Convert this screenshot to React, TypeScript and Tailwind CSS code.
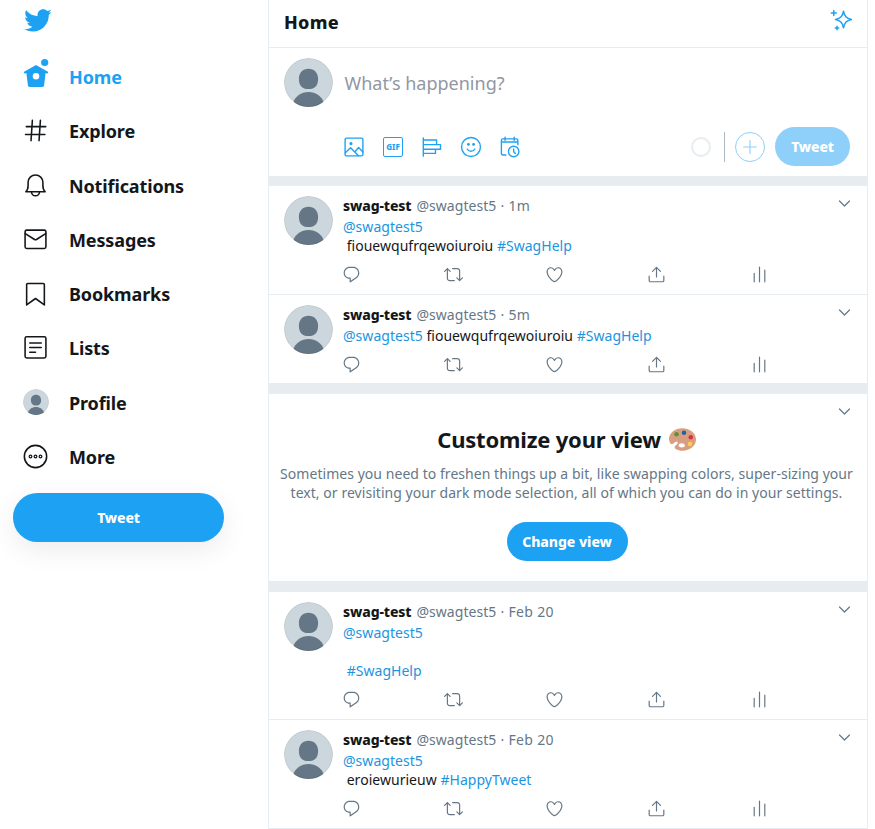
import React from "react";

type IconProps = { className?: string };

const Stroke = ({ className = "", w = 1.5, children }: { className?: string; w?: number; children: React.ReactNode }) => (
  <svg viewBox="0 0 24 24" className={className} fill="none" stroke="currentColor" strokeWidth={w} strokeLinecap="round" strokeLinejoin="round">
    {children}
  </svg>
);

const Solid = ({ className = "", d }: { className?: string; d: string }) => (
  <svg viewBox="0 0 24 24" className={className} fill="currentColor">
    <path d={d} />
  </svg>
);

const BIRD =
  "M23.643 4.937c-.835.37-1.732.62-2.675.733.962-.576 1.7-1.49 2.048-2.578-.9.534-1.897.922-2.958 1.13-.85-.904-2.06-1.47-3.4-1.47-2.572 0-4.658 2.086-4.658 4.66 0 .364.042.718.12 1.06-3.873-.195-7.304-2.05-9.602-4.868-.4.69-.63 1.49-.63 2.342 0 1.616.823 3.043 2.072 3.878-.764-.025-1.482-.234-2.11-.583v.06c0 2.257 1.605 4.14 3.737 4.568-.392.106-.803.162-1.227.162-.3 0-.593-.028-.877-.082.593 1.85 2.313 3.198 4.352 3.234-1.595 1.25-3.604 1.995-5.786 1.995-.376 0-.747-.022-1.112-.065 2.062 1.323 4.51 2.093 7.14 2.093 8.57 0 13.255-7.098 13.255-13.254 0-.2-.005-.402-.014-.602.91-.658 1.7-1.477 2.323-2.41z";
const REPLY =
  "M14.046 2.242l-4.148-.01h-.002c-4.374 0-7.8 3.427-7.8 7.802 0 4.098 3.186 7.206 7.465 7.37v3.828c0 .108.044.286.12.403.142.225.384.347.632.347.138 0 .277-.038.402-.118.264-.168 6.473-4.14 8.088-5.506 1.902-1.61 3.04-3.97 3.043-6.312v-.017c-.006-4.367-3.43-7.787-7.8-7.788zm3.787 12.972c-1.134.96-4.862 3.405-6.772 4.643V16.67c0-.414-.335-.75-.75-.75h-.396c-3.66 0-6.318-2.476-6.318-5.886 0-3.534 2.768-6.302 6.3-6.302l4.147.01h.002c3.532 0 6.3 2.766 6.302 6.296-.003 1.91-.942 3.844-2.514 5.176z";
const RETWEET =
  "M23.77 15.67c-.292-.293-.767-.293-1.06 0l-2.22 2.22V7.65c0-2.068-1.683-3.75-3.75-3.75h-5.85c-.414 0-.75.336-.75.75s.336.75.75.75h5.85c1.24 0 2.25 1.01 2.25 2.25v10.24l-2.22-2.22c-.293-.293-.768-.293-1.06 0s-.294.768 0 1.06l3.5 3.5c.145.147.337.22.53.22s.383-.072.53-.22l3.5-3.5c.294-.292.294-.767 0-1.06zm-10.66 3.28H7.26c-1.24 0-2.25-1.01-2.25-2.25V6.46l2.22 2.22c.148.147.34.22.532.22s.384-.073.53-.22c.293-.293.293-.768 0-1.06l-3.5-3.5c-.293-.294-.768-.294-1.06 0l-3.5 3.5c-.294.292-.294.767 0 1.06s.767.293 1.06 0l2.22-2.22V16.7c0 2.068 1.683 3.75 3.75 3.75h5.85c.414 0 .75-.336.75-.75s-.337-.75-.75-.75z";
const HEART =
  "M12 21.638h-.014C9.403 21.59 1.95 14.856 1.95 8.478c0-3.064 2.525-5.754 5.403-5.754 2.29 0 3.83 1.58 4.646 2.73.814-1.148 2.354-2.73 4.645-2.73 2.88 0 5.404 2.69 5.404 5.755 0 6.376-7.454 13.11-10.037 13.157H12zM7.354 4.225c-2.08 0-3.903 1.988-3.903 4.255 0 5.74 7.034 11.596 8.55 11.658 1.518-.062 8.55-5.917 8.55-11.658 0-2.267-1.823-4.255-3.903-4.255-2.528 0-3.94 2.936-3.952 2.965-.23.562-1.156.562-1.387 0-.014-.03-1.425-2.965-3.954-2.965z";
const SHARE =
  "M17.53 7.47l-5-5c-.293-.293-.768-.293-1.06 0l-5 5c-.294.293-.294.768 0 1.06s.767.294 1.06 0l3.72-3.72V15c0 .414.336.75.75.75s.75-.336.75-.75V4.81l3.72 3.72c.146.147.338.22.53.22s.384-.072.53-.22c.293-.293.293-.767 0-1.06zM19.708 21.944H4.292C3.028 21.944 2 20.916 2 19.652V14c0-.414.336-.75.75-.75s.75.336.75.75v5.652c0 .437.355.792.792.792h15.416c.437 0 .792-.355.792-.792V14c0-.414.336-.75.75-.75s.75.336.75.75v5.652c0 1.264-1.028 2.292-2.292 2.292z";

const Avatar = ({ className = "" }: IconProps) => (
  <svg viewBox="0 0 49 49" className={`shrink-0 rounded-full ${className}`}>
    <circle cx="24.5" cy="24.5" r="24.5" fill="#ccd6dd" />
    <path d="M24.5 10.800c5.700 0 9.600 4.100 9.600 9.900 0 6.900-3 10.300-9.600 10.300s-9.600-3.400-9.600-10.300c0-5.800 3.900-9.900 9.600-9.900z" fill="#657786" />
    <path d="M8.700 45.500C11.200 38.200 17 34 24.500 34s13.300 4.200 15.800 11.500C36 48 30.300 49 24.500 49s-11.500-1-15.800-3.500z" fill="#657786" />
    <circle cx="24.5" cy="24.5" r="24" fill="none" stroke="#000" strokeOpacity="0.06" />
  </svg>
);

const NAV_ICON = "h-[25px] w-[25px]";

const HomeIcon = () => (
  <svg viewBox="0 0 26 32" className="h-[32px] w-[26px]" fill="currentColor">
    <circle cx="21.700" cy="5.500" r="3.600" />
    <path
      fillRule="evenodd"
      d="M13 8l11.500 6.400c.7.400.9 1.100.4 1.700-.3.400-.8.500-1.300.3l-1-.5-1.500 12.400c-.1 1-.9 1.700-1.900 1.700H6.800c-1 0-1.800-.7-1.900-1.700L3.400 15.900l-1 .5c-.5.200-1 .1-1.300-.3-.5-.6-.3-1.300.4-1.700zM13 15.900a3.300 3.300 0 100 6.600 3.300 3.300 0 000-6.600z"
    />
  </svg>
);

const nav: { label: string; icon: React.ReactNode }[] = [
  { label: "Home", icon: <HomeIcon /> },
  {
    label: "Explore",
    icon: (
      <Stroke className={NAV_ICON}>
        <path d="M9 2.300L7.700 21.700M16.700 2.300L15.400 21.700M3.200 8.300h18.600M2.400 15.800h18.600" />
      </Stroke>
    ),
  },
  {
    label: "Notifications",
    icon: (
      <Stroke className={NAV_ICON}>
        <path d="M2.700 18c1.500-1.300 2.200-3.200 2.200-6V8.900C4.900 5 8.100 2 12 2S19.100 5 19.100 8.900V12c0 2.800.7 4.700 2.200 6z" />
        <path d="M8.200 18.200c0 2.100 1.700 3.700 3.800 3.700s3.800-1.600 3.800-3.700" />
      </Stroke>
    ),
  },
  {
    label: "Messages",
    icon: (
      <Stroke className={NAV_ICON}>
        <rect x="2" y="3" width="20" height="17.600" rx="1.600" />
        <path d="M2.200 6.400l8.900 5.600c.6.400 1.200.4 1.800 0l8.900-5.600" />
      </Stroke>
    ),
  },
  {
    label: "Bookmarks",
    icon: (
      <Stroke className={NAV_ICON}>
        <path d="M3.500 23V3.400c0-.6.400-1 1-1h15c.6 0 1 .4 1 1V23L12 16.800z" />
      </Stroke>
    ),
  },
  {
    label: "Lists",
    icon: (
      <Stroke className={NAV_ICON}>
        <rect x="2" y="1.700" width="20" height="20.400" rx="1.600" />
        <path d="M6.500 7.600h11M6.500 12h11M6.500 16.500h5.500" />
      </Stroke>
    ),
  },
  { label: "Profile", icon: <Avatar className="h-[26px] w-[26px]" /> },
  {
    label: "More",
    icon: (
      <Stroke className={NAV_ICON}>
        <circle cx="12" cy="12" r="10.700" />
        <g strokeWidth="1.200">
          <circle cx="7.200" cy="12" r="1.300" />
          <circle cx="12" cy="12" r="1.300" />
          <circle cx="16.800" cy="12" r="1.300" />
        </g>
      </Stroke>
    ),
  },
];

const Chevron = () => (
  <svg viewBox="0 0 12 7" className="h-[7px] w-[12px] text-[#657786]" fill="none" stroke="currentColor" strokeWidth="1.200" strokeLinecap="round" strokeLinejoin="round">
    <path d="M1.500 1l5 5 5-5" />
  </svg>
);

const Actions = () => (
  <div className="-ml-px mt-[10px] flex h-[19px] text-[#657786]">
    {[REPLY, RETWEET, HEART, SHARE].map((d, i) => (
      <div key={i} className="w-[101.700px]">
        <Solid d={d} className="h-[19px] w-[19px]" />
      </div>
    ))}
    <Stroke className="ml-px h-[19px] w-[19px]">
      <path d="M12 2.800v18.400M5.300 10.500v10.700M18.700 6.500v14.700" />
    </Stroke>
  </div>
);

const Link = ({ children }: { children: React.ReactNode }) => <span className="text-[#1b95e0]">{children}</span>;

function Tweet({ time, frame, children }: { time: string; frame: string; children: React.ReactNode }) {
  return (
    <article className={`flex pl-[15px] pr-[17px] pt-[10px] ${frame}`}>
      <Avatar className="h-[49px] w-[49px]" />
      <div className="ml-[10px] min-w-0 flex-1">
        <div className="flex h-[21px] justify-between">
          <div className="text-[14px] leading-[19px] whitespace-pre text-[#657786]">
            <span className="font-extrabold tracking-[-0.120px] text-[#14171a]">swag-test</span>
            <span className="ml-[5px] tracking-[0.050px]">@swagtest5</span>
            <span className="tracking-[0.330px]"> · {time}</span>
          </div>
          <div className="pt-[4px]">
            <Chevron />
          </div>
        </div>
        <div className="text-[14px] leading-[19px] whitespace-pre tracking-[0.030px] text-[#14171a]">{children}</div>
        <Actions />
      </div>
    </article>
  );
}

const Gap = ({ className = "" }: IconProps) => <div className={`-mx-px bg-[#e6ecf0] ${className}`} />;

const composer = [
  <>
    <rect x="2.300" y="2.300" width="19.400" height="19.400" rx="1.500" />
    <circle cx="8.700" cy="8.300" r="1" fill="currentColor" />
    <path d="M2.500 18.300l5.800-5.500 8.500 8.800M12.800 17.500l4.200-5 4.700 5" />
  </>,
  null,
  <>
    <path d="M2.500 2v20M2.500 4.400h14.500v5H2.500M2.500 9.400h18.800v5.100H2.500M2.500 14.500h13.300V19H2.500" />
  </>,
  <>
    <circle cx="12" cy="12" r="10.300" />
    <path d="M7.800 14.200c.8 1.600 2.300 2.500 4.200 2.500s3.400-.9 4.200-2.500" />
    <circle cx="9.200" cy="9.200" r=".8" fill="currentColor" />
    <circle cx="14.800" cy="9.200" r=".8" fill="currentColor" />
  </>,
  <>
    <path d="M7.500 20.700H4.400c-1 0-1.800-.8-1.800-1.800V5c0-1 .8-1.800 1.800-1.800h14.400c1 0 1.800.8 1.800 1.800v4.500M2.600 6.500h18M6.600 1.200v3.500M16.600 1.200v3.500" />
    <circle cx="16" cy="16.900" r="5.700" />
    <path d="M16 14v3.200l1.900 1.900" />
  </>,
];

export default function App() {
  return (
    <div className="flex h-[829px] w-[875px] overflow-hidden bg-white font-['Noto_Sans','Open_Sans',sans-serif] text-[#14171a]">
      <aside className="w-[268px] shrink-0 pl-[13px]">
        <div className="flex h-[50px] pl-[10px] pt-[6px] text-[#1da1f2]">
          <Solid d={BIRD} className="h-[29px] w-[29px]" />
        </div>
        <nav>
          {nav.map((n, i) => (
            <div key={n.label} className={`flex h-[54.250px] items-center pl-[10px] ${i === 0 ? "text-[#1da1f2]" : ""}`}>
              <span className={`flex w-[26px] ${i === 0 ? "-mt-[8px]" : "-mt-[1px]"}`}>{n.icon}</span>
              <span className="ml-[20px] text-[18px] font-bold leading-[24px] tracking-[-0.130px]">{n.label}</span>
            </div>
          ))}
        </nav>
        <button className="mt-[9px] flex h-[49px] w-[211px] items-center justify-center rounded-full bg-[#1da1f2] text-[14px] font-extrabold tracking-[-0.150px] text-white shadow-[0_8px_28px_rgba(0,0,0,0.08)]">
          Tweet
        </button>
      </aside>

      <main className="h-[829px] w-[600px] shrink-0 border-x border-[#e6ecf0]">
        <header className="flex h-[48px] items-center justify-between border-b border-[#e6ecf0] pl-[15px] pr-[15px]">
          <h1 className="pb-[3px] text-[18px] font-extrabold leading-[24px] tracking-[0.300px]">Home</h1>
          <svg viewBox="0 0 22 22" className="-mt-[7px] h-[22px] w-[22px] text-[#1da1f2]" fill="none" stroke="currentColor" strokeWidth="1.500" strokeLinejoin="round" strokeLinecap="round">
            <path d="M13.500 2.200c1 5.100 2.700 7.200 7.900 8.300-5.200 1.100-6.900 3.200-7.900 8.300-1-5.100-2.700-7.200-7.900-8.300 5.200-1.100 6.900-3.200 7.900-8.300z" />
            <path d="M3.800 1.600v5M1.300 4.100h5M7 17.300v3.400M5.300 19h3.400" />
          </svg>
        </header>

        <section className="h-[128px] pl-[15px] pr-[17px] pt-[10px]">
          <div className="flex h-[49px]">
            <Avatar className="h-[49px] w-[49px]" />
            <div className="ml-[11.500px] pt-[12px] text-[18px] leading-[26px] text-[#9197a3]">What’s happening?</div>
          </div>
          <div className="mt-[20px] flex h-[39px] w-[566px] items-center pl-[59px]">
            <div className="flex flex-1 gap-[17px] text-[#1da1f2]">
              {composer.map((c, i) =>
                c ? (
                  <Stroke key={i} w={1.5} className="h-[22px] w-[22px]">
                    {c}
                  </Stroke>
                ) : (
                  <div key={i} className="flex h-[22px] w-[22px] items-center justify-center">
                    <div className="flex h-[20px] w-[20px] items-center justify-center rounded-[2px] border-[1.500px] border-current text-[8px] font-extrabold leading-none">
                      GIF
                    </div>
                  </div>
                ),
              )}
            </div>
            <div className="h-[20px] w-[20px] rounded-full border-2 border-[#e6ecf0]" />
            <div className="ml-[13px] h-[30px] w-px bg-[#aab8c2]" />
            <div className="ml-[10px] flex h-[30px] w-[30px] items-center justify-center rounded-full border border-[#8ed0f9] text-[#8ed0f9]">
              <Stroke w={1.500} className="h-[18px] w-[18px]">
                <path d="M12 3.500v17M3.500 12h17" />
              </Stroke>
            </div>
            <button className="ml-[10px] h-[39px] w-[75px] rounded-full bg-[#8ed0f9] text-[14px] font-extrabold tracking-[-0.150px] text-white">Tweet</button>
          </div>
        </section>

        <Gap className="h-[10px]" />
        <Tweet time="1m" frame="h-[109px] border-b border-[#e6ecf0]">
          <Link>@swagtest5</Link>
          {"\n fiouewqufrqewoiuroiu "}
          <Link>#SwagHelp</Link>
        </Tweet>
        <Tweet time="5m" frame="h-[88px]">
          <Link>@swagtest5</Link>
          {" fiouewqufrqewoiuroiu "}
          <Link>#SwagHelp</Link>
        </Tweet>
        <Gap className="h-[11px]" />

        <section className="flex h-[187px] flex-col items-center pr-[2px]">
          <div className="flex h-[30px] w-full justify-end pr-[15px] pt-[14px]">
            <Chevron />
          </div>
          <div className="flex h-[30px] items-center pr-px">
            <h2 className="text-[22px] font-bold leading-[30px] tracking-[-0.200px]">Customize your view</h2>
            <svg viewBox="0 0 36 36" className="ml-[8px] h-[27px] w-[27px]">
              <path
                fill="#d99e82"
                d="M18 3C8.100 3 0 9.300 0 17.100c0 2.100.6 4.100 1.600 5.900 1 1.700 2.900 1.200 4.300.2 1.700-1.200 3.700-3.200 5.200-2.300 1.700 1-.6 3.600-2.600 5.500-1.500 1.400-1.400 3.100.4 4.100C11.600 32 14.700 33 18 33c9.900 0 18-6.700 18-15S27.900 3 18 3zm-1 25.500c-2.300 0-4.200-1.200-4.200-2.900s1.900-2.700 4.200-2.700 4.200 1.400 4.200 3-1.900 2.600-4.200 2.600z"
              />
              <circle cx="10" cy="11" r="3" fill="#5c913b" />
              <circle cx="20" cy="9" r="3" fill="#226699" />
              <circle cx="29" cy="15" r="3" fill="#dd2e44" />
              <circle cx="28" cy="24" r="3" fill="#ffcc4d" />
            </svg>
          </div>
          <p className="mt-[10px] pr-px text-center text-[14px] leading-[19px] whitespace-nowrap tracking-[0.045px] text-[#657786]">
            Sometimes you need to freshen things up a bit, like swapping colors, super-sizing your
            <br />
            text, or revisiting your dark mode selection, all of which you can do in your settings.
          </p>
          <button className="mt-[20px] h-[39px] w-[121px] rounded-full bg-[#1da1f2] text-[14px] font-extrabold tracking-[-0.050px] text-white">Change view</button>
        </section>

        <Gap className="h-[11px]" />
        <Tweet time="Feb 20" frame="h-[128px] border-b border-[#e6ecf0]">
          <Link>@swagtest5</Link>
          {"\n\n "}
          <Link>#SwagHelp</Link>
        </Tweet>
        <Tweet time="Feb 20" frame="h-[109px] border-b border-[#e6ecf0]">
          <Link>@swagtest5</Link>
          {"\n eroiewurieuw "}
          <Link>#HappyTweet</Link>
        </Tweet>
      </main>
    </div>
  );
}
